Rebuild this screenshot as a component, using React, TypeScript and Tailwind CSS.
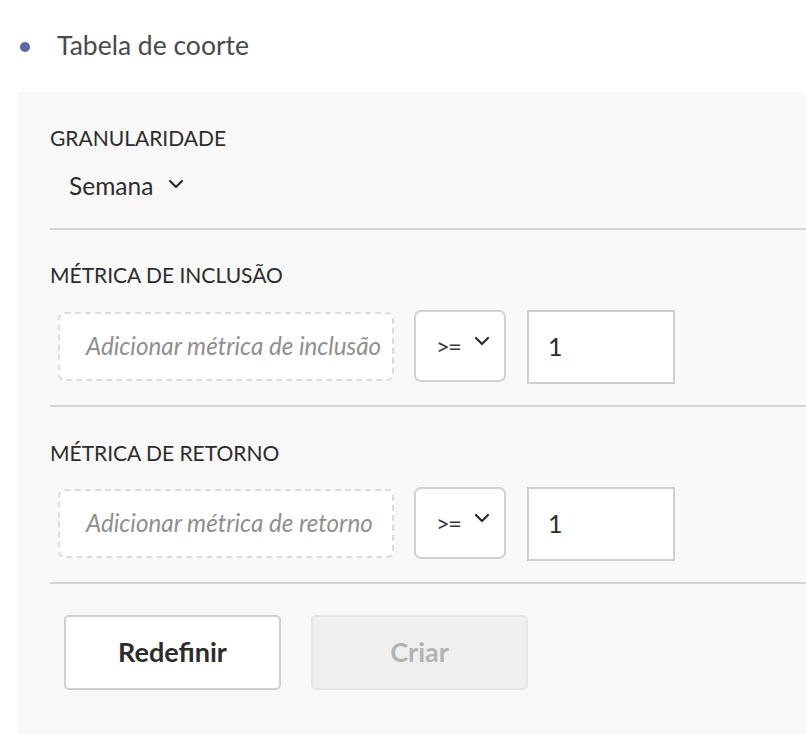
import React from 'react';

const Chevron: React.FC<{ className?: string }> = ({ className }) => (
  <svg viewBox="0 0 16 10" className={className} fill="none" stroke="currentColor" strokeWidth="2.2" strokeLinecap="round" strokeLinejoin="round">
    <polyline points="2,2 8,8 14,2" />
  </svg>
);

const MetricRow: React.FC<{ placeholder: string; top: string }> = ({ placeholder, top }) => (
  <div className={`flex items-start ${top}`}>
    <div className="ml-[8px] mt-[2px] flex h-[69px] w-[336px] items-center overflow-hidden whitespace-nowrap rounded-[7px] border-2 border-dashed border-[#dcdcdc] bg-white pl-[26px]">
      <span className="text-[24.2px] italic text-[#8f8f8f]">{placeholder}</span>
    </div>
    <div className="ml-[20px] flex h-[72px] w-[92px] items-start rounded-[7px] border-2 border-[#d2d2d2] bg-white pl-[20px] pt-[20px]">
      <span className="text-[24px] leading-[28px] tracking-[-2px] text-[#3a3a3a]">&gt;=</span>
      <Chevron className="ml-[13px] mt-[4px] h-[10px] w-[18px] text-[#2a2a2a]" />
    </div>
    <div className="ml-[21px] flex h-[74px] w-[148px] items-center border-2 border-[#cfcfcf] bg-white pl-[19px]">
      <span className="text-[25px] text-[#2c2c2c]">1</span>
    </div>
  </div>
);

const App: React.FC = () => {
  return (
    <div className="min-h-[734px] bg-white font-['Lato','Liberation_Sans',sans-serif]">
      <div className="flex h-[92px] items-start pl-[20px] pt-[26px]">
        <span className="mt-[16px] h-[10px] w-[10px] rounded-full bg-[#5c67a6]" />
        <span className="ml-[27px] text-[26.5px] leading-[38px] text-[#4a4a4a]">Tabela de coorte</span>
      </div>

      <div className="ml-[18px] h-[642px] bg-[#f8f8f8] pl-[32px]">
        <div className="pt-[34px]">
          <div className="text-[21px] leading-[24px] text-[#2c2c2c]">GRANULARIDADE</div>
          <div className="mt-[22px] flex h-[28px] items-center pl-[19px]">
            <span className="text-[24.5px] text-[#2c2c2c]">Semana</span>
            <Chevron className="ml-[14px] mb-[4px] h-[10px] w-[18px] text-[#2a2a2a]" />
          </div>
        </div>
        <div className="mt-[28px] h-[2px] bg-[#d3d3d3]" />

        <div className="pt-[33px] text-[21px] leading-[24px] text-[#2c2c2c]">MÉTRICA DE INCLUSÃO</div>
        <MetricRow placeholder="Adicionar métrica de inclusão" top="mt-[23px]" />
        <div className="mt-[21px] h-[2px] bg-[#d3d3d3]" />

        <div className="pt-[34px] text-[21px] leading-[24px] text-[#2c2c2c]">MÉTRICA DE RETORNO</div>
        <MetricRow placeholder="Adicionar métrica de retorno" top="mt-[22px]" />
        <div className="mt-[21px] h-[2px] bg-[#d3d3d3]" />

        <div className="ml-[14px] mt-[31px] flex gap-[30px]">
          <button className="h-[75px] w-[217px] rounded-[5px] border-2 border-[#d0d0d0] bg-white text-[27px] font-bold text-[#2c2c2c]">
            Redefinir
          </button>
          <button className="h-[75px] w-[217px] rounded-[5px] border-2 border-[#e6e6e6] bg-[#efefef] text-[27px] font-bold text-[#b3b3b3]">
            Criar
          </button>
        </div>
      </div>
    </div>
  );
};

export default App;
